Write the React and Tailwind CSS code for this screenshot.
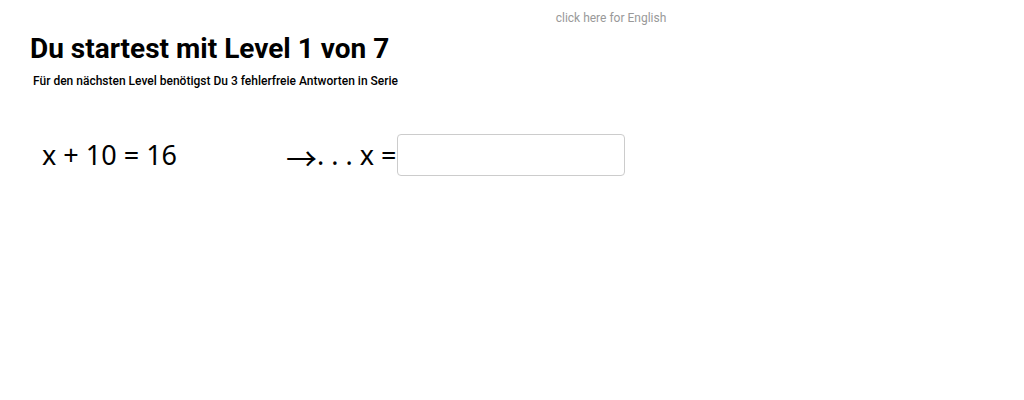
export default function App() {
  return (
    <div className="w-[1024px] h-[400px] bg-white relative font-['Roboto',sans-serif] text-black">
      <div className="pt-[10px] flex justify-center pl-[198px]">
        <a className="text-[12px] text-[#999999] leading-[16px]">click here for English</a>
      </div>
      <div className="pl-[30px] pt-[6px]">
        <h1 className="text-[28px] font-bold leading-[34px] tracking-[0px]">Du startest mit Level 1 von 7</h1>
        <p className="mt-[7px] pl-[3px] text-[12px] font-medium tracking-[0px] leading-[16px]">
          Für den nächsten Level benötigst Du 3 fehlerfreie Antworten in Serie
        </p>
      </div>
      <div className="flex items-center pl-[42px] mt-[45px] font-['Noto_Sans',sans-serif] text-[27px]">
        <span className="w-[244px]">x + 10 = 16</span>
        <span className="flex items-center">
          <span className="font-['Noto_Sans_CJK_JP',sans-serif] text-[31px] leading-none mt-[2px]">→</span>
          <span>. . . x =</span>
        </span>
        <input className="w-[228px] h-[42px] border border-[#cccccc] rounded-[4px] outline-none" />
      </div>
    </div>
  );
}
